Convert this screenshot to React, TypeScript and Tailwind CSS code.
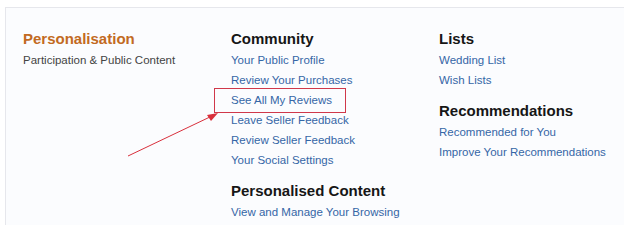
import React from "react";

const font = { fontFamily: '"Liberation Sans", Arial, sans-serif' };

function Section({ title, links, className = "" }: { title: string; links: string[]; className?: string }) {
  return (
    <div className={className}>
      <h3 className="text-[15px] leading-[20px] font-bold text-[#161616]">{title}</h3>
      <ul className="mt-[1px]">
        {links.map((l) => (
          <li key={l} className="text-[11.5px] leading-[20px] text-[#3566a6] whitespace-nowrap">
            <a href="#">{l}</a>
          </li>
        ))}
      </ul>
    </div>
  );
}

export default function App() {
  return (
    <div className="relative w-[624px] h-[225px] overflow-hidden bg-white" style={font}>
      <div className="ml-[5px] mt-[7px] h-[240px] border-t border-l border-[#e6e7ec] bg-[#fbfcfe] pl-[17px] pt-[21px]">
        <div className="grid grid-cols-[208px_208px_190px]">
          <div>
            <h2 className="text-[15px] leading-[20px] font-bold text-[#c26a22]">Personalisation</h2>
            <p className="mt-[1px] text-[11.5px] leading-[20px] text-[#444]">Participation &amp; Public Content</p>
          </div>
          <div>
            <Section
              title="Community"
              links={[
                "Your Public Profile",
                "Review Your Purchases",
                "See All My Reviews",
                "Leave Seller Feedback",
                "Review Seller Feedback",
                "Your Social Settings",
              ]}
            />
            <Section className="mt-[11px]" title="Personalised Content" links={["View and Manage Your Browsing"]} />
          </div>
          <div>
            <Section title="Lists" links={["Wedding List", "Wish Lists"]} />
            <Section
              className="mt-[11px]"
              title="Recommendations"
              links={["Recommended for You", "Improve Your Recommendations"]}
            />
          </div>
        </div>
      </div>

      {/* annotation box */}
      <div className="absolute left-[214px] top-[88px] w-[132px] h-[25px] border border-[#d0384a]" />
      {/* annotation arrow */}
      <svg className="absolute left-0 top-0" width="624" height="225" viewBox="0 0 624 225">
        <line x1="128" y1="156" x2="212" y2="116" stroke="#d9303c" strokeWidth="1" />
        <polygon points="218,113 207,115 211,121" fill="#d9303c" />
      </svg>
    </div>
  );
}
